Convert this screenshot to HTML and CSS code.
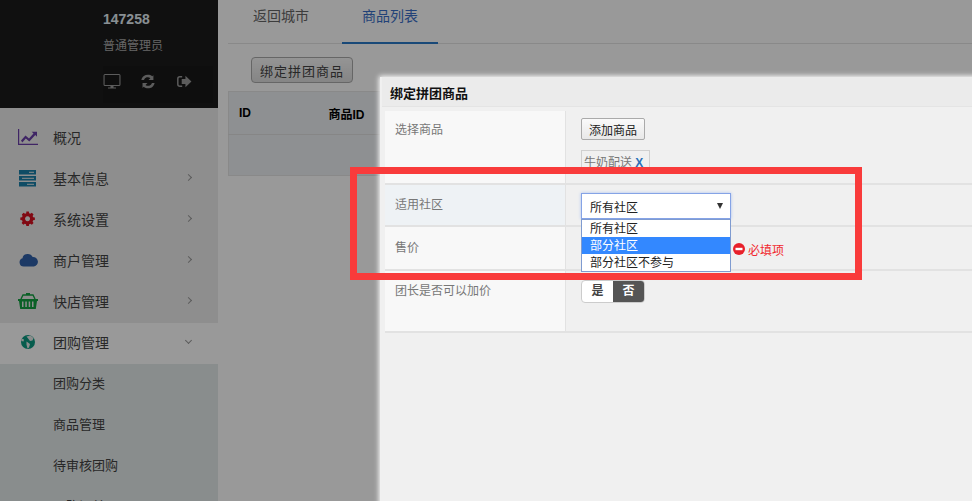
FILE: index.html
```html
<!DOCTYPE html>
<html lang="zh">
<head>
<meta charset="utf-8">
<title>绑定拼团商品</title>
<link rel="stylesheet" href="styles.css">
</head>
<body>
<div class="page">
  <aside class="sidebar">
    <div class="profile">
      <div class="name">147258</div>
      <div class="role">普通管理员</div>
      <div class="tools">
        <svg class="tool t1" viewBox="0 0 18 16"><path fill="currentColor" fill-rule="evenodd" d="M2 1h14a1.500 1.500 0 0 1 1.500 1.500v9A1.500 1.500 0 0 1 16 13h-5.500v1.400h2.500v1.100H5v-1.100h2.500V13H2a1.500 1.500 0 0 1-1.500-1.500v-9A1.500 1.500 0 0 1 2 1zm-.4 1.100v9.800h14.800V2.100z"/></svg>
        <svg class="tool t2" viewBox="0 0 16 16"><path fill="currentColor" d="M14.300 1.200v5.300H9l2.100-2.100A4.400 4.400 0 0 0 4.200 6.300H1.400a7.200 7.200 0 0 1 11.700-3.900zM2.700 14.800V9.500H8l-2.100 2.100a4.400 4.400 0 0 0 6.900-1.900h2.800a7.200 7.200 0 0 1-11.700 3.900z"/></svg>
        <svg class="tool t3" viewBox="0 0 16 14"><path fill="currentColor" d="M5.500 1v1.600H3A1.400 1.400 0 0 0 1.600 4v6A1.400 1.400 0 0 0 3 11.400h2.500V13H3a3 3 0 0 1-3-3V4a3 3 0 0 1 3-3zM9 .8 15.500 7 9 13.200V9.800H5V4.200h4z"/></svg>
      </div>
    </div>
    <nav class="nav">
      <a class="nav-item">
        <svg class="nav-icon" viewBox="0 0 20 18"><path fill="#6a3fa8" d="M0 1h1.200v14.800H20V17H0z"/><path fill="#6a3fa8" d="M3 12.500l4.500-5 3.500 3 4.500-5-1.800-1.700H19v5l-1.700-1.800-6 6.500-3.500-3-3.500 4z"/></svg>
        <span class="nav-label">概况</span>
      </a>
      <a class="nav-item">
        <svg class="nav-icon" viewBox="0 0 20 18"><g fill="#1a7fa8"><rect x="1" y="1" width="17" height="4.500"/><rect x="1" y="7" width="17" height="4.500"/><rect x="1" y="13" width="17" height="4.500"/></g><g fill="#e8e8e8"><rect x="11" y="2.800" width="5" height="1"/><rect x="4" y="8.800" width="12" height="1"/><rect x="9" y="14.800" width="7" height="1"/></g></svg>
        <span class="nav-label">基本信息</span>
        <span class="chev"></span>
      </a>
      <a class="nav-item">
        <svg class="nav-icon" viewBox="0 0 20 18"><path fill="#d81020" fill-rule="evenodd" d="M8.300 1.500h2.900l.4 2 1.300.6 1.800-1.100 2 2-1.100 1.800.6 1.400 2 .4v2.800l-2 .4-.6 1.400 1.100 1.800-2 2-1.800-1.100-1.300.5-.4 2H8.300l-.4-2-1.400-.5-1.700 1.100-2-2 1.100-1.800-.6-1.400-2-.4V8.600l2-.4.6-1.400L3.100 5l2-2 1.700 1.100 1.400-.6zM9.700 7a2.900 2.900 0 1 0 .01 0z" transform="translate(1.200 .2) scale(.86)"/></svg>
        <span class="nav-label">系统设置</span>
        <span class="chev"></span>
      </a>
      <a class="nav-item">
        <svg class="nav-icon" viewBox="0 0 20 18"><path fill="#2f5fa8" d="M5 15.500a4.200 4.200 0 0 1-1.200-8.200A5 5 0 0 1 9 3a5.300 5.300 0 0 1 5 3 4.800 4.800 0 0 1 1.300 9.500z" transform="translate(.7 0)"/></svg>
        <span class="nav-label">商户管理</span>
        <span class="chev"></span>
      </a>
      <a class="nav-item">
        <svg class="nav-icon" viewBox="0 0 20 18"><path fill="#11a040" fill-rule="evenodd" d="M0 7h20v2h-1l-1.200 8H2.200L1 9H0zM4 9.500v5.500h1.500V9.500zm3.300 0v5.500h1.500V9.500zm3.400 0v5.500h1.500V9.500zm3.300 0v5.500h1.500V9.500z"/><path fill="none" stroke="#11a040" stroke-width="1.400" d="M3 7l2-4h10l2 4"/><rect x="8" y="1" width="4" height="2" fill="#11a040"/></svg>
        <span class="nav-label">快店管理</span>
        <span class="chev"></span>
      </a>
      <a class="nav-item active">
        <svg class="nav-icon" viewBox="0 0 20 18"><circle cx="10" cy="9" r="7" fill="#0a9a80"/><path fill="#e8eaea" d="M8.500 3.500l4-1 3 2.500-1 2.500-2.500.5L10.500 6zM8.500 8.500L12 11l-1 3.500-1.500 1-1-4zM3.500 5.500L6 6.500 5.500 8.500 3.500 8z"/></svg>
        <span class="nav-label">团购管理</span>
        <span class="chev down"></span>
      </a>
      <div class="subnav">
        <a class="sub-item">团购分类</a>
        <a class="sub-item">商品管理</a>
        <a class="sub-item">待审核团购</a>
        <a class="sub-item">团购订单</a>
      </div>
    </nav>
  </aside>
  <main class="main">
    <div class="tabs">
      <a class="tab">返回城市</a>
      <a class="tab current">商品列表</a>
    </div>
    <button class="bind-btn">绑定拼团商品</button>
    <table class="grid">
      <thead><tr><th class="c-id">ID</th><th>商品ID</th></tr></thead>
      <tbody><tr><td colspan="2"></td></tr></tbody>
    </table>
  </main>
</div>

<div class="dim"></div>

<section class="modal">
  <h2 class="modal-title">绑定拼团商品</h2>
  <div class="row row-goods">
    <div class="label">选择商品</div>
    <div class="field">
      <button class="add-btn">添加商品</button>
      <div class="tag">牛奶配送 <b>X</b></div>
    </div>
  </div>
  <div class="row row-area">
    <div class="label">适用社区</div>
    <div class="field">
      <div class="select">所有社区<span class="caret"></span></div>
      <ul class="options">
        <li>所有社区</li>
        <li class="on">部分社区</li>
        <li>部分社区不参与</li>
      </ul>
    </div>
  </div>
  <div class="row row-price">
    <div class="label">售价</div>
    <div class="field field-err">
      <svg class="err-icon" viewBox="0 0 12 12"><circle cx="6" cy="6" r="6" fill="#e8202a"/><rect x="2.500" y="4.800" width="7" height="2.400" fill="#fff"/></svg>
      <span class="err">必填项</span>
    </div>
  </div>
  <div class="row row-add">
    <div class="label">团长是否可以加价</div>
    <div class="field">
      <div class="toggle"><span>是</span><span class="sel">否</span></div>
    </div>
  </div>
</section>

<div class="callout"></div>
</body>
</html>
```
FILE: styles.css
```css
* { box-sizing: border-box; }
html, body { margin: 0; height: 100%; overflow: hidden; }
body {
  font-family: "Liberation Sans", "Noto Sans CJK SC", sans-serif;
  font-size: 12px;
  color: #333;
  background: #fff;
}
.page { display: flex; height: 501px; width: 972px; overflow: hidden; }

.sidebar { width: 218px; flex: none; background: #ededed; overflow: hidden; }
.profile { height: 108px; background: #1c1c1c; padding: 11px 0 0 103px; }
.name { font-size: 14px; font-weight: 700; line-height: 16px; color: #e4eef5; }
.role { margin-top: 10px; line-height: 18px; color: #aaa; }
.tools { display: flex; align-items: center; height: 37px; margin-top: 11px; margin-right: 5px; padding-bottom: 7px; color: #999; background: #181818; }
.tool { display: block; flex: none; }
.t1 { width: 18px; height: 16px; margin-right: 19px; }
.t2 { width: 15px; height: 15px; margin-right: 22px; }
.t3 { width: 15px; height: 13px; }

.nav { padding-top: 10px; }
.nav-item { display: flex; align-items: center; height: 41px; padding: 0 0 4px 18px; font-size: 14px; color: #444; }
.nav-item.active { background: #fff; }
.nav-icon { width: 20px; height: 18px; flex: none; margin-right: 15px; }
.nav-label { flex: 1; }
.chev { width: 5px; height: 5px; margin-right: 27px; border-top: 1px solid #999; border-right: 1px solid #999; transform: rotate(45deg); }
.chev.down { transform: rotate(135deg); margin-top: -3px; }
.subnav { background: #e5ebeb; }
.sub-item { display: flex; align-items: center; height: 41px; padding: 0 0 4px 53px; font-size: 13px; color: #444; }

.main { flex: 1; padding: 0 0 0 10px; }
.tabs { display: flex; height: 44px; border-bottom: 1px solid #e4e4e4; }
.tab { padding-top: 7px; text-align: center; font-size: 14px; line-height: 18px; color: #666; }
.tab:first-child { width: 114px; margin-right: 0; padding-right: 8px; }
.tab.current { width: 96px; color: #3a6fc8; border-bottom: 2px solid #2a7ac8; height: 44px; }
.bind-btn {
  display: block; margin: 13px 0 8px 23px; width: 102px; height: 26px; padding: 0;
  font: 13px "Liberation Sans", "Noto Sans CJK SC", sans-serif; letter-spacing: 1px;
  color: #444; background: linear-gradient(#f8f8f8, #dedede); border: 1px solid #aaa; border-radius: 4px;
}
.grid { width: 744px; border-collapse: collapse; border: 1px solid #e4e4e4; background: #edf1f4; }
.grid th { height: 43px; padding: 0 0 0 10px; text-align: left; font-size: 12px; color: #000; border-bottom: 1px solid #e0e0e0; }
.grid .c-id { width: 90px; }
.grid td { height: 41px; }

.dim { position: absolute; inset: 0; background: rgba(0, 0, 0, .4); }

.modal {
  position: absolute; left: 380px; top: 77px; width: 640px; height: 460px;
  background: #f0f0f0; padding: 0 0 0 5px; box-shadow: 0 0 5px 1px #fff;
}
.modal-title { margin: 0 0 0 -3px; height: 30px; padding-left: 8px; font-size: 13px; line-height: 33px; color: #111; background: #ebebeb; border-bottom: 1px solid #e4e4e4; }
.row { display: flex; border-bottom: 2px solid #e2e2e2; }
.label { width: 181px; flex: none; padding-left: 10px; color: #777; background: #f8f8f8; border-right: 1px solid #e2e2e2; line-height: 18px; }
.field { flex: 1; padding-left: 15px; position: relative; }
.row-goods { height: 78px; }
.row-goods .label { padding-top: 10px; margin-top: 4px; }
.row-goods .field { padding-top: 11px; }
.row-area { height: 42px; }
.row-area .label { padding-top: 11px; background: #eef2f5; }
.row-area .field { padding-top: 8px; }
.row-price { height: 44px; }
.row-price .label { padding-top: 12px; }
.row-add { height: 62px; }
.row-add .label { padding-top: 11px; }
.row-add .field { padding-top: 9px; }

.add-btn {
  display: block; width: 64px; height: 22px; padding: 0;
  font: 12px "Liberation Sans", "Noto Sans CJK SC", sans-serif; color: #222;
  background: linear-gradient(#fafafa, #e8e8e8); border: 1px solid #aaa; border-radius: 2px;
}
.tag { display: inline-block; margin-top: 10px; height: 24px; padding: 0 6px 0 2px; line-height: 24px; color: #777; border: 1px solid #d0d0d0; }
.tag b { color: #2a70b8; }

.select {
  position: relative; width: 150px; height: 26px; padding-left: 8px; line-height: 28px; color: #222; background: #fff;
  border: 1px solid #85a3e6; box-shadow: 0 0 3px #a9c0f0;
}
.caret { position: absolute; right: 7px; top: 9px; border-style: solid; border-color: #333 transparent transparent; border-width: 6px 3px 0; }
.options {
  position: absolute; left: 15px; top: 34px; z-index: 1; width: 150px; margin: 0; padding: 0; list-style: none;
  background: #fff; border: 1px solid #7f9bd0;
}
.options li { height: 17px; padding-left: 8px; line-height: 19px; color: #222; }
.options li.on { background: #3388ff; color: #fff; }

.field-err { display: flex; align-items: center; padding-left: 167px; padding-top: 2px; }
.err-icon { width: 12px; height: 12px; flex: none; margin-right: 3px; }
.err { color: #f0282e; }

.toggle { display: flex; width: 64px; height: 23px; border: 1px solid #ccc; border-radius: 4px; overflow: hidden; line-height: 21px; text-align: center; font-weight: 700; background: #fff; }
.toggle span { flex: 1; color: #444; }
.toggle .sel { background: #555; color: #fff; }

.callout { position: absolute; left: 350px; top: 167px; width: 512px; height: 113px; border: 7px solid #f93b3b; }
```
